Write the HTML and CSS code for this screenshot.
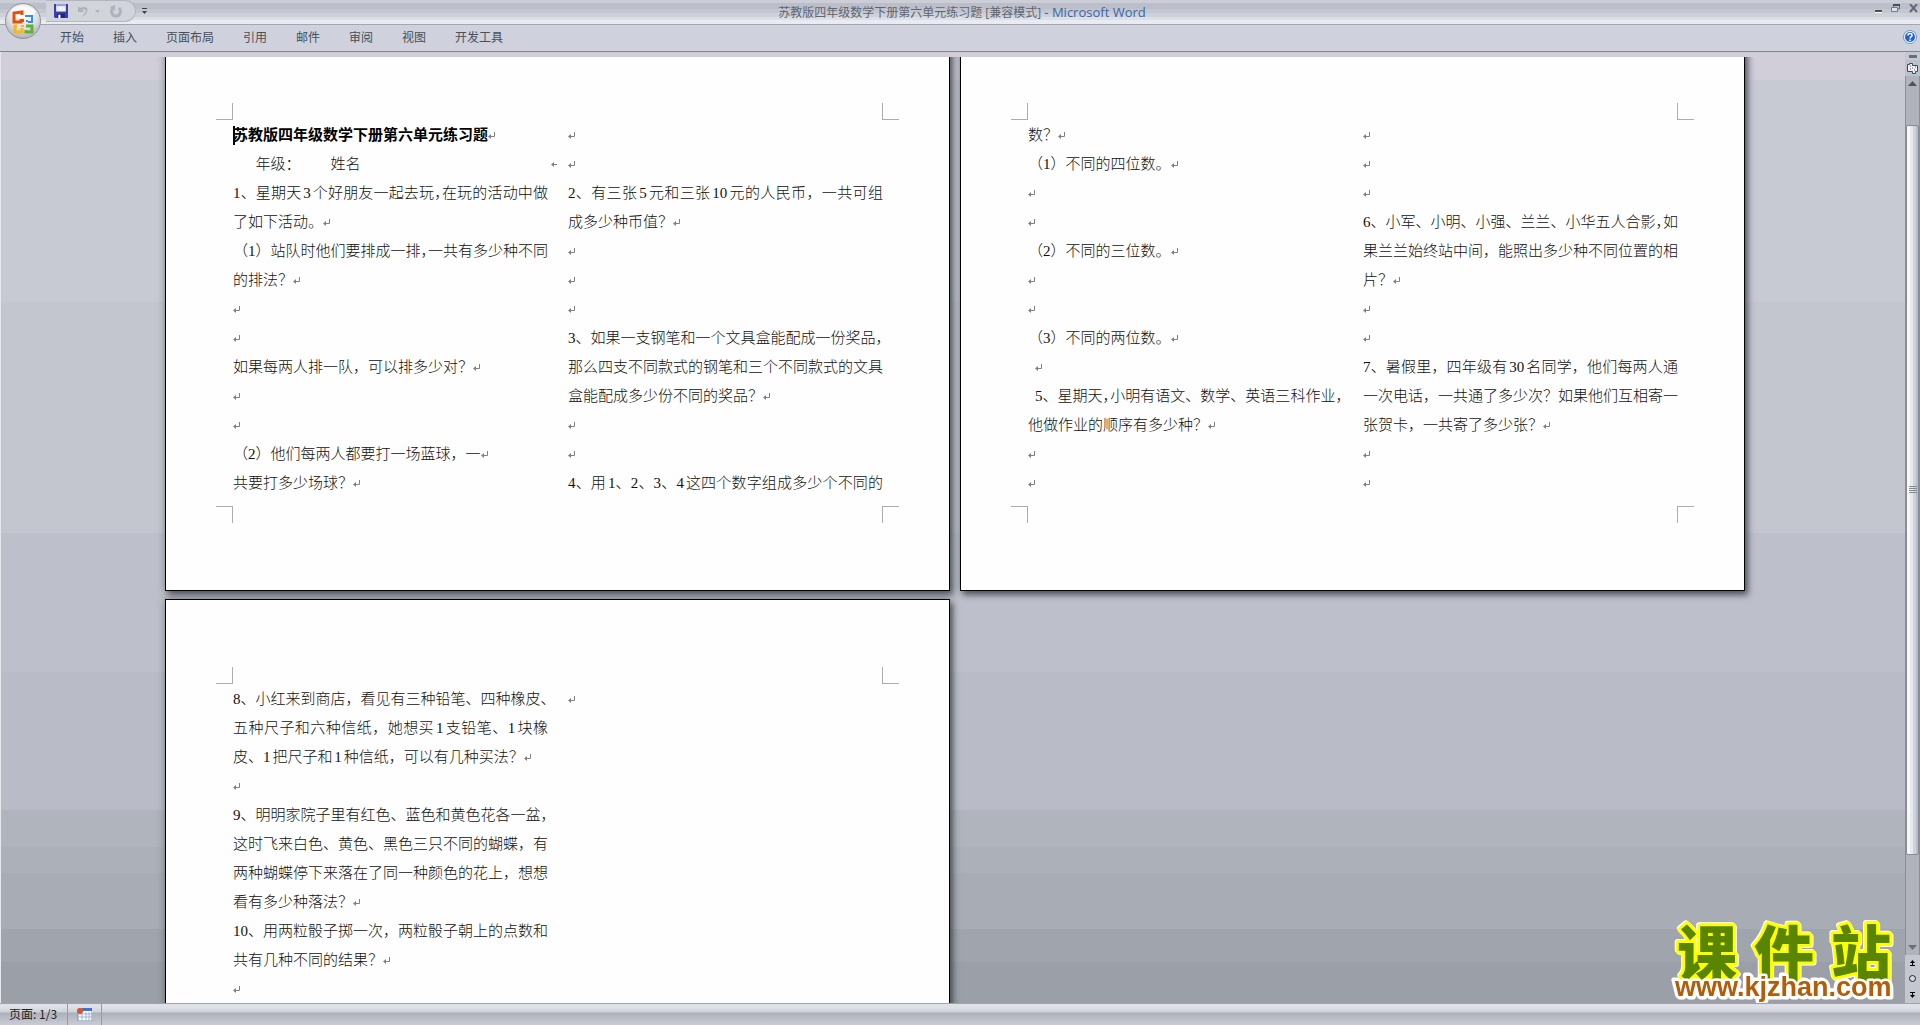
FILE: index.html
```html
<!DOCTYPE html>
<html lang="zh-CN">
<head>
<meta charset="utf-8">
<title>苏教版四年级数学下册第六单元练习题 - Microsoft Word</title>
<link rel="stylesheet" href="styles.css">
</head>
<body>
<header class="titlebar">
  <div class="tools">
    <div class="quick">
      <button aria-label="保存"><svg width="14" height="14" viewBox="0 0 13 13"><path d="M0 0h13v13H1L0 12z" fill="#3a3fae"/><path d="M2 0h9v7H2z" fill="#eef2fb"/><path d="M2 0h9v2H2z" fill="#8fa4e0"/><path d="M3 9h7v4H3z" fill="#23276f"/><path d="M4 10h2v3H4z" fill="#fff"/></svg></button>
      <button aria-label="撤消"><svg width="24" height="13" viewBox="0 0 24 13"><path d="M1 1v6h6L5 5c3-2 5 0 3 3l-3 4c6-3 8-11 1-10L3 3z" fill="#aeb2bd"/><path d="M18 5h5l-2.500 3z" fill="#aeb2bd"/></svg></button>
      <button aria-label="恢复"><svg width="12" height="13" viewBox="0 0 12 13"><path d="M3 3C0 6 2 11 6 11s6-5 3-8" fill="none" stroke="#aeb2bd" stroke-width="3"/><path d="M5 0v6L0 2z" fill="#aeb2bd"/></svg></button>
    </div>
    <button class="more" aria-label="自定义快速访问工具栏"><svg width="5" height="6" viewBox="0 0 5 6"><path d="M0 0h5v1H0zM0 3h5L2.500 6z" fill="#444"/></svg></button>
  </div>
  <h1>苏教版四年级数学下册第六单元练习题 [兼容模式] <span>- Microsoft Word</span></h1>
  <div class="window-buttons">
    <button aria-label="最小化"><svg width="8" height="9" viewBox="0 0 8 9"><path d="M1 6h7v2H1z" fill="#4a4e57"/><path d="M1 8h7v1H1z" fill="#fff"/></svg></button>
    <button aria-label="还原"><svg width="9" height="9" viewBox="0 0 9 9"><path d="M2.500 4V.5h6V5H7" fill="none" stroke="#656b78"/><path d="M2 0h7v2H2z" fill="#4a4e57"/><path d="M.5 3.500h6v4h-6z" fill="#dde2ec" stroke="#6f7a90"/></svg></button>
    <button aria-label="关闭"><svg width="9" height="9" viewBox="0 0 9 9"><path d="M1 0l7 8M8 0L1 8" stroke="#626978" stroke-width="2"/></svg></button>
  </div>
</header>
<button class="office" aria-label="Office 按钮">
  <svg width="36" height="38" viewBox="0 0 36 38">
    <defs><radialGradient id="orb" cx=".5" cy=".3" r=".7"><stop offset="0" stop-color="#fff"/><stop offset=".6" stop-color="#e0e0e3"/><stop offset="1" stop-color="#aeb0b6"/></radialGradient></defs>
    <circle cx="18" cy="19" r="17.500" fill="url(#orb)" stroke="#8f929a"/>
    <ellipse cx="18" cy="10" rx="12" ry="6" fill="#fff" opacity=".7"/>
    <g fill="none" stroke-width="3">
      <path d="M16 17v3h-7v-9l8-1v3" stroke="#e2500f"/>
      <path d="M21 15v-1h6v6h-4" stroke="#3a8fd9" stroke-width="2"/>
      <path d="M12 24H10v6h7v-4" stroke="#f5b81a"/>
      <path d="M21 24h6v6h-6v-2" stroke="#5fb233"/>
    </g>
    <path d="M16 17h3v3h-3z" fill="#e2500f"/><path d="M21 18h2v2h-2z" fill="#3a8fd9"/><path d="M16 23h3v2h-3z" fill="#f5b81a"/><path d="M21 23h2v2h-2z" fill="#5fb233"/>
  </svg>
</button>
<nav class="ribbon">
  <a href="#">开始</a><a href="#">插入</a><a href="#">页面布局</a><a href="#">引用</a><a href="#">邮件</a><a href="#">审阅</a><a href="#">视图</a><a href="#">开发工具</a>
  <button class="help" aria-label="帮助"><svg width="14" height="14" viewBox="0 0 14 14"><circle cx="7" cy="7" r="6.500" fill="#f4f8ff" stroke="#5d9ac9"/><circle cx="7" cy="7" r="5" fill="#2560d0"/><path d="M5 5.500Q5 3.500 7 3.500T9 5.500Q9 6.500 7.500 7.200L7 8.500M7 9.500V11" fill="none" stroke="#fff" stroke-width="1.500"/></svg></button>
</nav>
<div class="workspace">
  <main class="desk">
    <div class="pages">
      <article class="page">
        <div class="body">
          <i class="mark tl"></i><i class="mark tr"></i><i class="mark bl"></i><i class="mark br"></i>
          <section>
            <h2 class="end">苏教版四年级数学下册第六单元练习题</h2>
            <p class="names">      年级：        姓名</p>
            <p class="full">1、星期天3个好朋友一起去玩<b>，</b>在玩的活动中做</p>
            <p class="end">了如下活动。</p>
            <p class="full">（1）站队时他们要排成一排<b>，</b>一共有多少种不同</p>
            <p class="end">的排法？</p>
            <p class="end"></p>
            <p class="end"></p>
            <p class="end">如果每两人排一队，可以排多少对？</p>
            <p class="end"></p>
            <p class="end"></p>
            <p class="end">（2）他们每两人都要打一场蓝球，一</p>
            <p class="end">共要打多少场球？</p>
          </section>
          <section>
            <p class="end"></p>
            <p class="end"></p>
            <p class="full">2、有三张5元和三张10元的人民币，一共可组</p>
            <p class="end">成多少种币值？</p>
            <p class="end"></p>
            <p class="end"></p>
            <p class="end"></p>
            <p class="full">3、如果一支钢笔和一个文具盒能配成一份奖品<b>，</b></p>
            <p class="full">那么四支不同款式的钢笔和三个不同款式的文具</p>
            <p class="end">盒能配成多少份不同的奖品？</p>
            <p class="end"></p>
            <p class="end"></p>
            <p class="full">4、用1、2、3、4这四个数字组成多少个不同的</p>
          </section>
        </div>
      </article>
      <article class="page">
        <div class="body">
          <i class="mark tl"></i><i class="mark tr"></i><i class="mark bl"></i><i class="mark br"></i>
          <section>
            <p class="end">数？</p>
            <p class="end">（1）不同的四位数。</p>
            <p class="end"></p>
            <p class="end"></p>
            <p class="end">（2）不同的三位数。</p>
            <p class="end"></p>
            <p class="end"></p>
            <p class="end">（3）不同的两位数。</p>
            <p class="end indent"></p>
            <p class="full indent">5、星期天<b>，</b>小明有语文、数学、英语三科作业<b>，</b></p>
            <p class="end">他做作业的顺序有多少种？</p>
            <p class="end"></p>
            <p class="end"></p>
          </section>
          <section>
            <p class="end"></p>
            <p class="end"></p>
            <p class="end"></p>
            <p class="full">6、小军、小明、小强、兰兰、小华五人合影<b>，</b>如</p>
            <p class="full">果兰兰始终站中间，能照出多少种不同位置的相</p>
            <p class="end">片？</p>
            <p class="end"></p>
            <p class="end"></p>
            <p class="full">7、暑假里，四年级有30名同学，他们每两人通</p>
            <p class="full">一次电话，一共通了多少次？如果他们互相寄一</p>
            <p class="end">张贺卡，一共寄了多少张？</p>
            <p class="end"></p>
            <p class="end"></p>
          </section>
        </div>
      </article>
      <article class="page">
        <div class="body">
          <i class="mark tl"></i><i class="mark tr"></i><i class="mark bl"></i><i class="mark br"></i>
          <section>
            <p class="full">8、小红来到商店，看见有三种铅笔、四种橡皮<b>、</b></p>
            <p class="full">五种尺子和六种信纸，她想买1支铅笔、1块橡</p>
            <p class="end">皮、1把尺子和1种信纸，可以有几种买法？</p>
            <p class="end"></p>
            <p class="full">9、明明家院子里有红色、蓝色和黄色花各一盆<b>，</b></p>
            <p class="full">这时飞来白色、黄色、黑色三只不同的蝴蝶，有</p>
            <p class="full">两种蝴蝶停下来落在了同一种颜色的花上，想想</p>
            <p class="end">看有多少种落法？</p>
            <p class="full">10、用两粒骰子掷一次，两粒骰子朝上的点数和</p>
            <p class="end">共有几种不同的结果？</p>
            <p class="end"></p>
          </section>
          <section>
            <p class="end"></p>
          </section>
        </div>
      </article>
    </div>
    <svg class="watermark" width="236" height="108" viewBox="0 0 236 108" role="img" aria-label="课件站 www.kjzhan.com">
      <g class="outline">
        <text class="logo" x="10 87 164" y="78">课件站</text>
        <text class="site" x="8" y="98">www.kjzhan.com</text>
      </g>
    </svg>
  </main>
  <aside class="scroll">
    <i class="split"></i>
    <button class="ruler" aria-label="标尺"><svg width="13" height="13" viewBox="0 0 13 13"><path d="M1.500 2.500h2v-1h3v2h5v6h-2v2h-3v-2h-5z" fill="#f4eef2" stroke="#324c6c"/><path d="M4 4h1M6 6h1M8 8h1M9 5h1M4 7h1" stroke="#6c5870"/></svg></button>
    <div class="track">
      <button aria-label="向上"><svg width="9" height="5" viewBox="0 0 9 5"><path d="M0 5h9L4.500 0z" fill="#4d525c"/></svg></button>
      <div class="thumb"><svg width="8" height="7" viewBox="0 0 8 7"><path d="M0 .5h8M0 2.500h8M0 4.500h8M0 6.500h8" stroke="#868a94"/></svg></div>
      <button class="down" aria-label="向下"><svg width="9" height="5" viewBox="0 0 9 5"><path d="M0 0h9L4.500 5z" fill="#6a6e79"/></svg></button>
    </div>
    <div class="browse">
      <button aria-label="前一页"><svg width="5" height="6" viewBox="0 0 5 6"><path d="M0 3L2.500 0 5 3H3v2h2v1H0V5h2V3z"/></svg></button>
      <button aria-label="选择浏览对象"><svg width="7" height="7" viewBox="0 0 7 7"><circle cx="3.500" cy="3.500" r="3" fill="#d7d8da" stroke="#222"/></svg></button>
      <button aria-label="下一页"><svg width="5" height="6" viewBox="0 0 5 6"><path d="M0 3l2.500 3L5 3H3V1h2V0H0v1h2v2z"/></svg></button>
    </div>
  </aside>
</div>
<footer class="status">
  <span class="count">页面: 1/3</span>
  <button aria-label="宏录制"><svg width="15" height="13" viewBox="0 0 15 13"><path d="M1 1h14v12H1z" fill="#fff" stroke="#6f8fc0"/><path d="M5 0h10v3H5z" fill="#3a72dc"/><path d="M2 6h13M2 9h13M5 4v9M9 4v9M12 4v9" stroke="#9ab4dc"/><circle cx="3" cy="3" r="3" fill="#d9532a"/></svg></button>
</footer>
</body>
</html>
```
FILE: styles.css
```css
* { box-sizing: border-box; }
body {
  margin: 0;
  height: 100vh;
  display: flex;
  flex-direction: column;
  overflow: hidden;
  position: relative;
  font: 12px/16px "Noto Sans CJK SC", sans-serif;
  background: #cfd2dc;
}
button { border: 0; padding: 0; background: none; display: flex; align-items: center; justify-content: center; }
svg { display: block; }

.titlebar {
  height: 25px;
  flex: none;
  display: grid;
  grid-template-columns: 1fr auto 1fr;
  align-items: start;
  border-bottom: 1px solid #a3a6af;
  background: linear-gradient(#cbced7 0 3px, #bcbfc9 3px 9px, #c4c7d0 9px 13px, #ced1d9 13px 17px, #dcdfe6 17px 20px, #e8ebf1 20px);
}
.tools { display: flex; }
.quick {
  width: 90px;
  height: 22px;
  margin-left: 46px;
  padding-left: 8px;
  display: flex;
  gap: 9px;
  border: 1px solid #b4b7c0;
  border-left: 0;
  border-radius: 0 11px 11px 0;
  background: #d2d4dc;
}
.quick button { height: 20px; }
.more { width: 16px; height: 22px; }
.titlebar h1 {
  margin: 0;
  padding: 4px 0 0 4px;
  white-space: pre;
  font: 12px/17px "Open Sans", "Noto Sans CJK SC", sans-serif;
  color: #61656f;
}
.titlebar h1 span { font-size: 13px; color: #3767ab; }
.window-buttons { padding: 4px 2px 0 0; display: flex; justify-content: flex-end; gap: 9px; }

.office { position: absolute; left: 5px; top: 2px; }

.ribbon {
  height: 27px;
  flex: none;
  display: flex;
  align-items: center;
  gap: 1px;
  padding: 0 3px 2px 46px;
  border-bottom: 1px solid #82858e;
  background: #cfd2dc;
}
.ribbon a { padding: 0 14px; font-size: 12px; color: #4a4e58; text-decoration: none; }
.help { margin-left: auto; }

.workspace {
  flex: 1;
  min-height: 0;
  display: flex;
  border-left: 1px solid #e6e8ee;
  background: linear-gradient(#d1cdd9 0 28px, #c7cad3 28px 250px, #c3c6cf 250px 481px, #bdc0ca 481px 620px, #b9bcc6 620px 758px, #b0b4bc 758px 795px, #acb0b8 795px 821px, #a8acb4 821px 877px, #a0a4ac 877px 910px, #9b9fa7 910px);
}
.desk { flex: 1; min-width: 0; margin-top: 5px; overflow: hidden; position: relative; }
.pages {
  display: grid;
  grid-template-columns: 785px 785px;
  gap: 8px 10px;
  justify-content: center;
  margin-top: -22px;
  padding-left: 4px;
}
.page {
  padding: 85px 66px 83px 67px;
  border: 1px solid #000;
  background: #fefefe;
  box-shadow: 3px 4px 6px rgba(50, 54, 60, .7), 0 0 8px rgba(70, 74, 84, .4);
}
.body {
  position: relative;
  min-height: 386px;
  display: grid;
  grid-template-columns: 315px 315px;
  gap: 20px;
  font: 300 15px/29px "Liberation Serif", "Noto Sans CJK SC", serif;
  text-autospace: normal;
  color: #111;
}
.body p, .body h2 { margin: 0; height: 29px; white-space: pre; font-size: 15px; }
.body h2 { font-weight: 700; color: #000; }
.body h2::before { content: ""; position: absolute; left: 0; top: 5px; width: 2px; height: 19px; background: #000; }
.body .full { white-space: nowrap; text-align: justify; text-align-last: justify; }
.body .indent { padding-left: 7px; }
.body b { font-weight: inherit; font-feature-settings: "halt"; }
.end::after {
  content: "";
  display: inline-block;
  width: 8px;
  height: 8px;
  background: url("data:image/svg+xml,%3Csvg xmlns='http://www.w3.org/2000/svg' width='8' height='8'%3E%3Cpath d='M6.500 0v4.500H1' fill='none' stroke='%23808080'/%3E%3Cpath d='M0 4.500L3 2v5z' fill='%23808080'/%3E%3C/svg%3E") no-repeat;
}
.names { display: flex; align-items: center; }
.names::after {
  content: "";
  width: 7px;
  height: 5px;
  margin-left: auto;
  margin-right: -10px;
  background: url("data:image/svg+xml,%3Csvg xmlns='http://www.w3.org/2000/svg' width='7' height='5'%3E%3Cpath d='M0 2.500L3 0v2h3v1H3v2z' fill='%23808080'/%3E%3C/svg%3E") no-repeat;
}

.mark { position: absolute; width: 17px; height: 17px; border: 0 solid #a9acb2; }
.tl { left: -17px; top: -18px; border-width: 0 1px 1px 0; }
.tr { right: -16px; top: -18px; border-width: 0 0 1px 1px; }
.bl { left: -17px; bottom: -16px; border-width: 1px 1px 0 0; }
.br { right: -16px; bottom: -16px; border-width: 1px 0 0 1px; }

.watermark { position: absolute; right: 2px; bottom: -3px; overflow: visible; }
.outline { filter: drop-shadow(1px 1px 0 #fff) drop-shadow(-1px -1px 0 #fff); }
.logo {
  font: 900 60px "Noto Sans CJK SC", sans-serif;
  fill: #5a8500;
  stroke: #ff0;
  stroke-width: 6px;
  stroke-linejoin: round;
  paint-order: stroke;
}
.site {
  font: 700 27px "Liberation Sans", sans-serif;
  fill: #b35c0a;
  stroke: #fff;
  stroke-width: 5px;
  stroke-linejoin: round;
  paint-order: stroke;
}

.scroll { width: 15px; display: flex; flex-direction: column; background: #c5c8d0; }
.split { width: 8px; height: 3px; margin: 3px 0 2px 4px; background: #6b6e76; }
.ruler { width: 15px; height: 16px; background: #bcc2cc; }
.track {
  flex: 1;
  display: flex;
  flex-direction: column;
  align-items: center;
  border: 1px solid #8b8e97;
  border-width: 0 1px;
  background: #b0b3bc;
}
.track button { height: 15px; flex: none; }
.thumb {
  width: 13px;
  height: 83%;
  margin-top: 34px;
  display: flex;
  align-items: center;
  justify-content: center;
  border: 1px solid #868a94;
  border-radius: 2px;
  background: linear-gradient(90deg, #fdf8ee 0 3px, #e6e9f1 3px 6px, #cbd1dd 6px 9px, #b9bcc6 9px);
}
.track .down { margin-top: auto; }
.browse { height: 48px; display: flex; flex-direction: column; justify-content: space-around; background: #c4c7cf; }

.status {
  height: 22px;
  flex: none;
  display: flex;
  color: #222;
  border-top: 1px solid #a0a3ab;
  background: linear-gradient(#dfe1e7 0 3px, #cdd0d8 8px, #adb0ba 9px, #c9ccd5);
}
.count { width: 68px; padding: 2px 0 0 9px; border-right: 1px solid #989ba4; }
.status button { width: 34px; border-right: 1px solid #989ba4; }
```
